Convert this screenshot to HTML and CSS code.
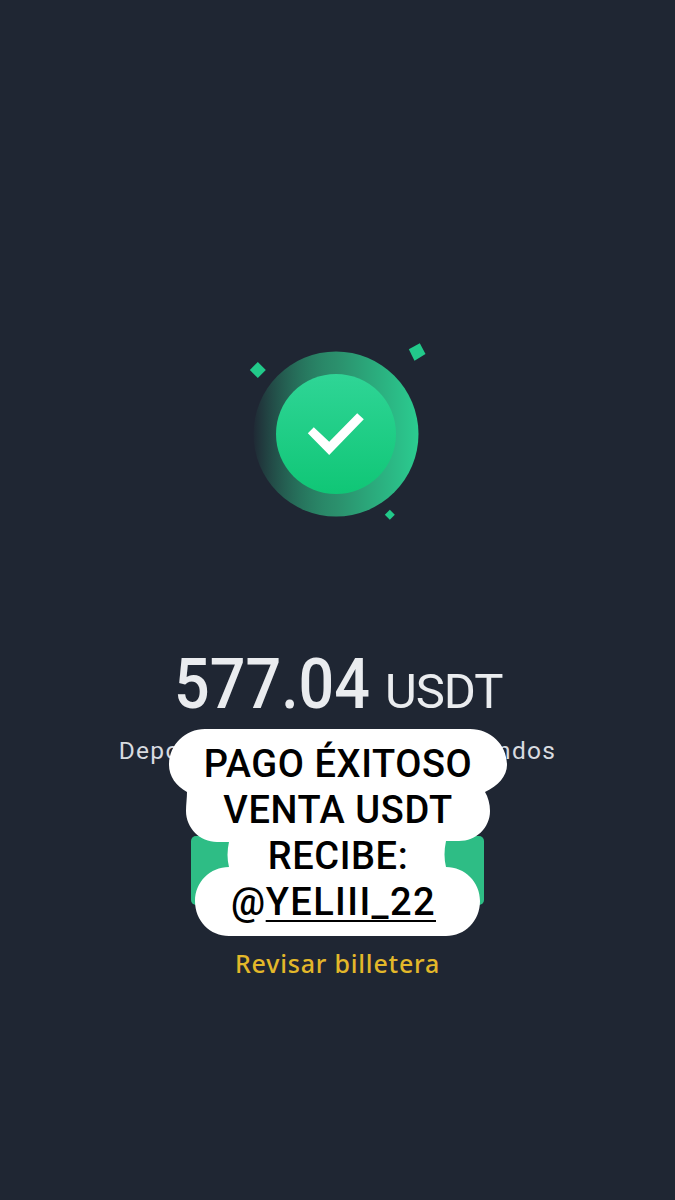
FILE: index.html
```html
<!DOCTYPE html>
<html lang="es">
<head>
<meta charset="utf-8">
<title>Pago éxitoso</title>
<link rel="stylesheet" href="styles.css">
</head>
<body>
<main class="screen">
  <svg class="badge" width="190" height="190" viewBox="0 0 190 190">
    <defs>
      <linearGradient id="ring" x1="0" y1="0" x2="1" y2="0">
        <stop offset="0" stop-color="#2ed08e" stop-opacity="0.02"/>
        <stop offset="0.5" stop-color="#2b8f6c"/>
        <stop offset="1" stop-color="#2bcc90"/>
      </linearGradient>
      <linearGradient id="core" x1="0" y1="0" x2="0" y2="1">
        <stop offset="0" stop-color="#2fd596"/>
        <stop offset="1" stop-color="#10c676"/>
      </linearGradient>
    </defs>
    <circle cx="95" cy="95" r="82.5" fill="url(#ring)"/>
    <circle cx="95" cy="95" r="60" fill="url(#core)"/>
    <path d="M66.800 94.300 L88.200 116 L122.800 80.300 L116.200 74.300 L88.200 102.700 L72.800 88.300 Z" fill="#fff"/>
    <path d="M8.800 31 L16.800 23 L24.800 31 L16.800 39 Z" fill="#22c98a"/>
    <path d="M178.800 4.300 L184.500 15 L173.500 21.700 L167.800 10.300 Z" fill="#22c98a"/>
    <path d="M143.800 175.700 L148.800 170.700 L153.800 175.700 L148.800 180.700 Z" fill="#22c98a"/>
  </svg>

  <div class="amount"><span class="value">577.04</span><span class="unit">USDT</span></div>
  <p class="note">Depositado en la billetera de fondos</p>
  <div class="cta"></div>
  <a class="link">Revisar billetera</a>

  <div class="caption">
    <svg class="caption-bg" width="338" height="207" viewBox="0 0 338 207">
      <path fill="#fff" d="M36 0 H301 C322 0 338 16 338 36 C338 47 329 57 316 63 C319 68 321 75 321 82 C321 99 307 112 290 112 H277 Q274 126 277 138 C296 138 311 153 311 172 C311 192 296 207 277 207 H60 C41 207 26 192 26 172 C26 153 41 138 60 138 Q57 126 60 113 H48 C31 113 17 99 17 82 C17 75 18 69 18 63 C7 57 0 47 0 36 C0 16 16 0 36 0 Z"/>
    </svg>
    <div class="caption-text">
      <div>PAGO ÉXITOSO</div>
      <div>VENTA USDT</div>
      <div>RECIBE:</div>
      <div class="handle">@<u>YELIII_22</u></div>
    </div>
  </div>
</main>
</body>
</html>
```
FILE: styles.css
```css
* { box-sizing: border-box; }
html, body { margin: 0; padding: 0; }
body { background: #1f2633; font-family: "Roboto", "Liberation Sans", sans-serif; }
.screen {
  position: relative;
  width: 675px;
  height: 1200px;
  display: flex;
  flex-direction: column;
  align-items: center;
  padding-top: 339px;
}
.badge { display: block; margin-right: 4px; }
.amount {
  margin-top: 120px;
  margin-left: 2px;
  color: #eaecef;
  line-height: 70px;
  white-space: nowrap;
}
.value {
  display: inline-block;
  font-size: 71px;
  font-weight: 500;
  transform: scaleX(0.885);
  transform-origin: left center;
  margin-right: -11px;
}
.unit { font-size: 49px; font-weight: 400; letter-spacing: -1px; }
.note {
  margin: -2px 0 0;
  color: #d8dbe0;
  font-size: 24.500px;
  line-height: 30px;
  letter-spacing: 1.3px;
  white-space: nowrap;
}
.cta {
  margin-top: 70px;
  width: 293px;
  height: 69px;
  border-radius: 5px;
  background: #2ebd85;
}
.link {
  margin-top: 41px;
  color: #e3b82a;
  font-family: "Noto Sans", "Roboto", sans-serif;
  font-size: 25px;
  font-weight: 500;
  line-height: 34px;
  letter-spacing: 0.8px;
}
.caption {
  position: absolute;
  left: 169px;
  top: 729px;
  width: 338px;
  height: 207px;
}
.caption-bg { position: absolute; left: 0; top: 0; }
.caption-text {
  position: relative;
  padding-top: 12px;
  text-align: center;
  color: #000;
  font-size: 38px;
  font-weight: 500;
  line-height: 46px;
  letter-spacing: 0.6px;
}
.handle { padding-right: 9px; }
.handle u {
  letter-spacing: 1.4px;
  text-decoration-thickness: 2px;
  text-underline-offset: 5px;
}
```
